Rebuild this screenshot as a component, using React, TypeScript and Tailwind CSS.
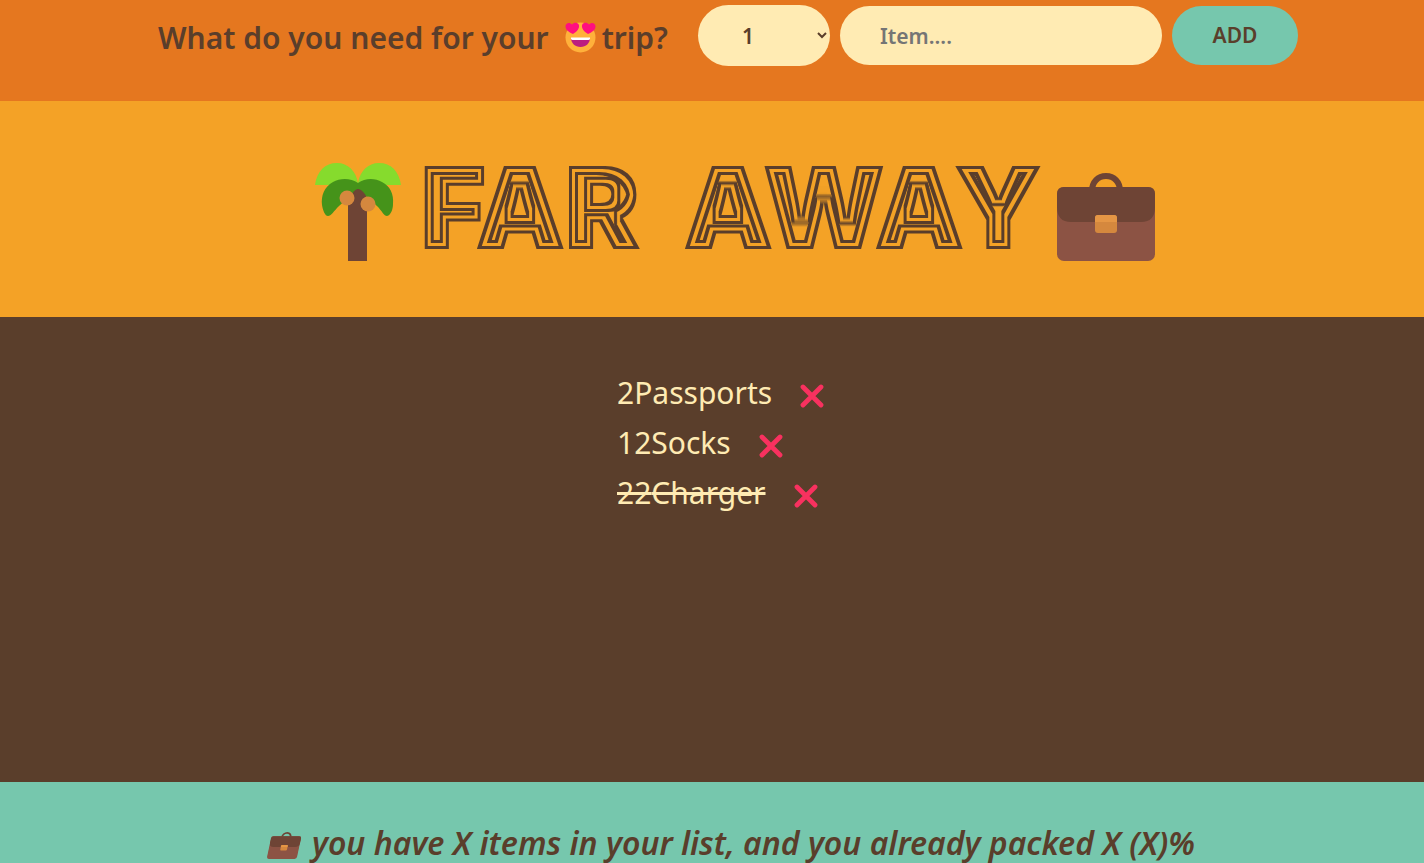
import { useState } from 'react';

type Item = { id: number; description: string; quantity: number; packed: boolean };

const initialItems: Item[] = [
  { id: 1, description: 'Passports', quantity: 2, packed: false },
  { id: 2, description: 'Socks', quantity: 12, packed: false },
  { id: 3, description: 'Charger', quantity: 22, packed: true },
];

const quantities = Array.from({ length: 20 }, (_, i) => i + 1);

function HeartEyes({ className }: { className: string }) {
  return (
    <svg viewBox="0 0 62 62" className={className} aria-hidden="true">
      <circle cx="31" cy="31" r="30" fill="#ffb13b" />
      <path fill="#ff0f80" d="M16 24C7 20 1 15 1 9C1 2 9 -1 14 5C18 0 27 0 28 7C29 14 22 20 16 24Z" />
      <path fill="#ff0f80" d="M46 24C40 20 33 14 34 7C35 0 44 0 48 5C53 -1 61 2 61 9C61 15 55 20 46 24Z" />
      <path fill="#bb1d80" d="M12 32H50C50 42 42 50 31 50S12 42 12 32Z" />
      <path fill="#fff" d="M12 31H50V34Q49 36 47 36H15Q13 36 12 34Z" />
    </svg>
  );
}

function PalmTree({ className }: { className: string }) {
  return (
    <svg viewBox="0 0 86 98" className={className} aria-hidden="true">
      <path fill="#86db2d" d="M0 22C2 8 10 0 22 0C33 0 41 8 43 20C45 8 53 0 64 0C76 0 84 8 86 22Z" />
      <path fill="#6e4435" d="M33 40C33 32 38 26 43 26S52 32 52 40V98H33Z" />
      <path fill="#45931a" d="M43 20C36 15 25 15 18 19C9 24 6 33 7 42C8 48 10 53 13 53C16 53 19 48 24 43L43 26L62 43C67 48 69 53 72 53C76 52 78 46 78 41C79 31 75 23 67 19C60 15 50 15 43 20Z" />
      <path fill="#6e4435" d="M33 42C35 31 40 26 43 26S50 30 52 35V48H33Z" />
      <circle cx="32" cy="35" r="7.5" fill="#d5883e" />
      <circle cx="53" cy="41" r="7.5" fill="#d5883e" />
    </svg>
  );
}

function Briefcase({ className }: { className: string }) {
  return (
    <svg viewBox="0 0 98 88" className={className} aria-hidden="true">
      <path d="M35 18C35 9 41 3 49 3S63 9 63 18" fill="none" stroke="#6e4435" strokeWidth="6" />
      <rect y="14" width="98" height="74" rx="7" fill="#8c5344" />
      <path fill="#6e4435" d="M7 14H91Q98 14 98 21V34Q98 49 84 49H14Q0 49 0 34V21Q0 14 7 14Z" />
      <rect x="38" y="42" width="22" height="18" rx="3" fill="#d5883e" />
      <path fill="#e59645" d="M38 49V45Q38 42 41 42H57Q60 42 60 45V49Z" />
    </svg>
  );
}

function CrossMark({ className }: { className: string }) {
  return (
    <svg viewBox="0 0 24 24" className={className} aria-hidden="true">
      <path d="M3 3L21 21M21 3L3 21" stroke="#f8315f" strokeWidth="4.8" strokeLinecap="round" />
    </svg>
  );
}

function InlineLetterFilter() {
  return (
    <svg className="absolute size-0" aria-hidden="true">
      <filter id="inline-letters" x="0" y="0" width="1" height="1" colorInterpolationFilters="sRGB">
        <feMorphology in="SourceGraphic" operator="erode" radius="3" result="edge" />
        <feMorphology in="SourceGraphic" operator="erode" radius="6" result="core" />
        <feMorphology in="SourceGraphic" operator="erode" radius="9" result="hollow" />
        <feComposite in="SourceGraphic" in2="edge" operator="out" result="outer" />
        <feComposite in="core" in2="hollow" operator="out" result="inner" />
        <feMerge>
          <feMergeNode in="outer" />
          <feMergeNode in="inner" />
        </feMerge>
      </filter>
    </svg>
  );
}

function Form({ onAdd }: { onAdd: (item: Item) => void }) {
  const [description, setDescription] = useState('');
  const [quantity, setQuantity] = useState(1);

  return (
    <form
      className="flex items-center justify-center bg-[#e5771f] pt-[5px] pr-0 pb-[35px] pl-8"
      onSubmit={(e) => {
        e.preventDefault();
        if (!description) return;
        onAdd({ id: Date.now(), description, quantity, packed: false });
        setDescription('');
        setQuantity(1);
      }}
    >
      <h3 className="flex w-[540px] items-center pt-1 text-[30px] leading-10 font-semibold">
        <span className="whitespace-nowrap">What do you need for your</span>
        <HeartEyes className="mr-[6px] ml-4 size-[31px] shrink-0" />
        <span>trip?</span>
      </h3>
      <div className="flex items-center gap-[10px] text-[21px] font-semibold">
        <select
          aria-label="Quantity"
          className="h-[61px] w-[132px] rounded-full bg-[#ffebb3] pl-10"
          value={quantity}
          onChange={(e) => setQuantity(Number(e.target.value))}
        >
          {quantities.map((n) => (
            <option key={n} value={n}>
              {n}
            </option>
          ))}
        </select>
        <input
          type="text"
          aria-label="Item"
          placeholder="Item...."
          className="h-[59px] w-[322px] rounded-full bg-[#ffebb3] px-10 placeholder:text-[#757575]"
          value={description}
          onChange={(e) => setDescription(e.target.value)}
        />
        <button type="submit" className="h-[59px] w-[126px] rounded-full bg-[#76c7ad]">
          ADD
        </button>
      </div>
    </form>
  );
}

function Logo() {
  return (
    <header className="flex h-[216px] items-center justify-center bg-[#f4a226] pl-[46px]">
      <InlineLetterFilter />
      <PalmTree className="mt-[6px] mr-5 h-[98px] w-[86px]" />
      <h1 className="flex gap-11 pb-1 font-['Inter','Liberation_Sans',sans-serif] text-[112px] leading-[130px] font-black [-webkit-text-stroke:2px_#5a3e2b] [filter:url(#inline-letters)]">
        <span>FAR</span>
        <span>AWAY</span>
      </h1>
      <Briefcase className="mt-4 ml-4 h-[88px] w-[98px]" />
    </header>
  );
}

function PackingList({ items, onDelete }: { items: Item[]; onDelete: (id: number) => void }) {
  return (
    <main className="flex flex-1 justify-center bg-[#5a3e2b] pt-[50px] text-[#ffebb3]">
      <ul className="w-[190px]">
        {items.map((item) => (
          <li key={item.id} className="flex h-[50px] items-center gap-7 text-[30px] whitespace-nowrap">
            <span className={item.packed ? 'line-through' : ''}>
              {item.quantity}
              {item.description}
            </span>
            <button type="button" aria-label="Remove item" className="mt-2" onClick={() => onDelete(item.id)}>
              <CrossMark className="size-6" />
            </button>
          </li>
        ))}
      </ul>
    </main>
  );
}

function Stats() {
  return (
    <footer className="flex h-[81px] items-end justify-center bg-[#76c7ad] pl-[40px] text-[32px] leading-10 font-semibold italic">
      <Briefcase className="mr-3 mb-1 h-[27px] w-[31px] -skew-x-12" />
      <p className="whitespace-nowrap">you have X items in your list, and you already packed X (X)%</p>
    </footer>
  );
}

export default function App() {
  const [items, setItems] = useState(initialItems);

  return (
    <div className="flex min-h-screen flex-col font-['Noto_Sans','Liberation_Sans',sans-serif] text-[#5a3e2b]">
      <Form onAdd={(item) => setItems((list) => [...list, item])} />
      <Logo />
      <PackingList items={items} onDelete={(id) => setItems((list) => list.filter((i) => i.id !== id))} />
      <Stats />
    </div>
  );
}
